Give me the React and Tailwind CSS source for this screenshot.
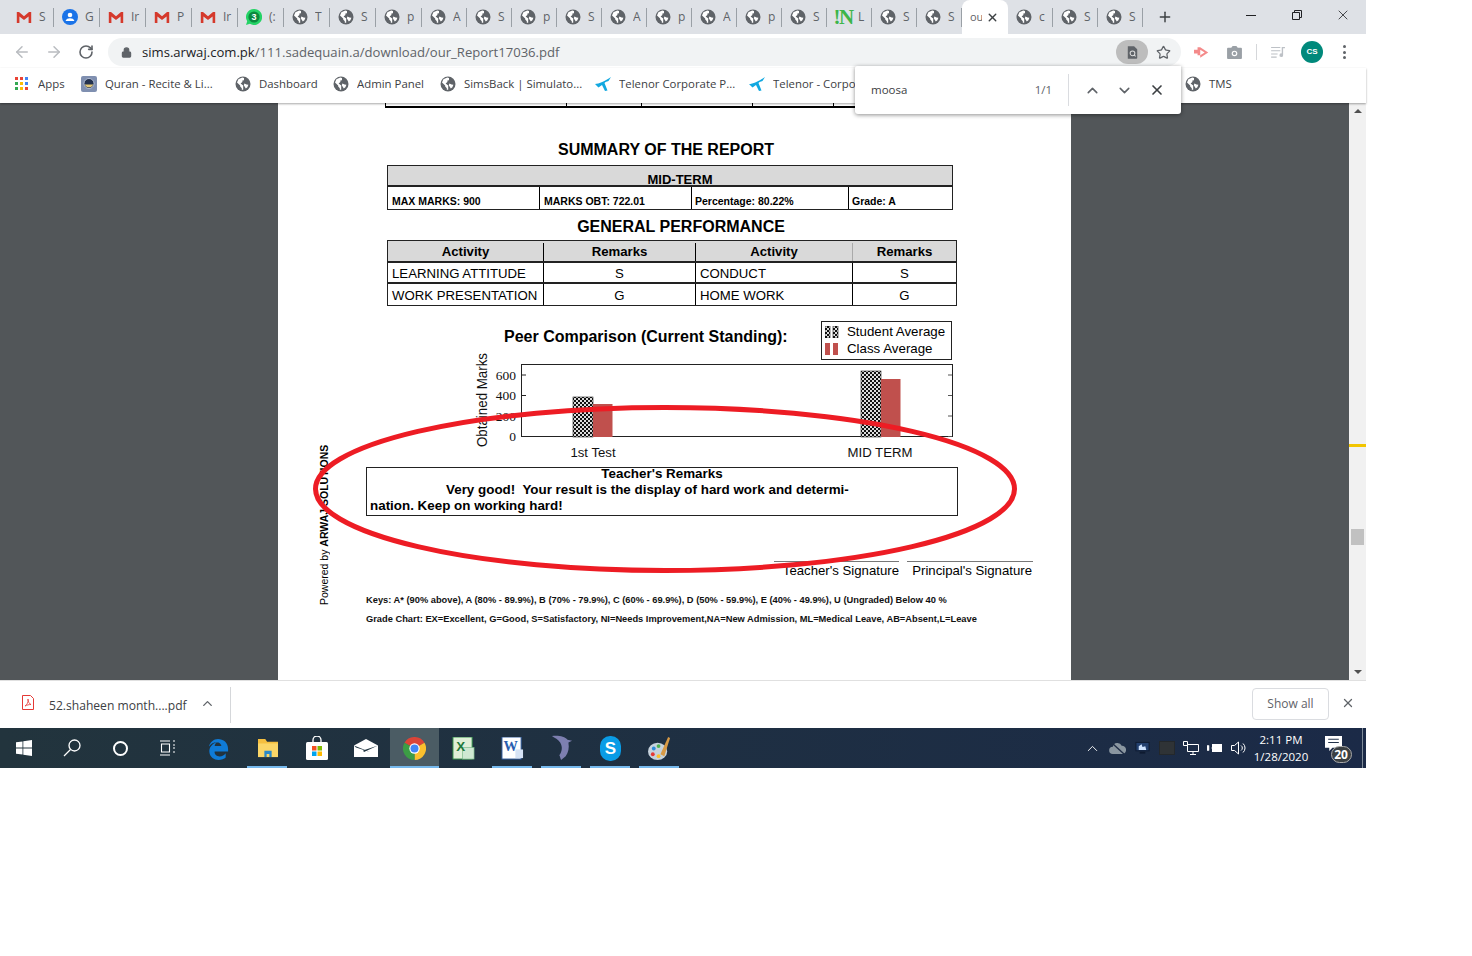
import React from 'react';
import { ArrowLeft, ArrowRight, RotateCw, Lock, Star, ChevronUp, ChevronDown, X, Plus } from 'lucide-react';

const UI = "font-['Open_Sans',sans-serif]";
const PDF = "font-['Liberation_Sans',sans-serif]";

function Globe({ className = 'w-4 h-4' }) {
  return (
    <svg viewBox="0 0 16 16" className={className}>
      <circle cx="8" cy="8" r="7.5" fill="#5f6368" />
      <path d="M7.2 1.6 3.4 3.2 2 6.4l3.2 3.2v1l1.6 1.6v1.6h1.4V9.6L5.6 7.4 7.4 6V4.6L9 4.2V2z" fill="#fff" />
      <path d="M11.6 8.4 9.4 7.4 8.8 9.2l2 3.4 1.6-1.4 1-2.4z" fill="#fff" />
    </svg>
  );
}

function Gmail() {
  return (
    <svg viewBox="0 0 16 16" className="w-[16px] h-4">
      <path d="M.8 3H3l5 4.2L13 3h2.2v11h-2.6V7.4L8 11 3.4 7.4V14H.8z" fill="#d5392c" />
    </svg>
  );
}

function Account() {
  return (
    <svg viewBox="0 0 16 16" className="w-4 h-4">
      <circle cx="8" cy="8" r="8" fill="#1a73e8" />
      <circle cx="8" cy="6" r="2.3" fill="#fff" />
      <path d="M3.6 12c.6-2 2.4-2.7 4.4-2.7s3.8.7 4.4 2.7z" fill="#fff" />
    </svg>
  );
}

function Whatsapp() {
  return (
    <svg viewBox="0 0 16 16" className="w-4 h-4">
      <path d="M8 0a8 8 0 0 0-6.8 12.2L0 16l3.9-1.2A8 8 0 1 0 8 0z" fill="#25d366" />
      <circle cx="8" cy="8" r="5.6" fill="#0b8a3e" />
      <text x="8" y="11" textAnchor="middle" fontSize="9" fontWeight="700" fill="#fff" fontFamily="Liberation Sans">3</text>
    </svg>
  );
}

const tabs = [
  ['m', 'S'], ['a', 'G'], ['m', 'Ir'], ['m', 'P'], ['m', 'Ir'], ['w', '(:'], ['g', 'T'], ['g', 'S'], ['g', 'p'], ['g', 'A'],
  ['g', 'S'], ['g', 'p'], ['g', 'S'], ['g', 'A'], ['g', 'p'], ['g', 'A'], ['g', 'p'], ['g', 'S'], ['i', 'L'], ['g', 'S'], ['g', 'S'],
];
const tabsAfter = ['c', 'S', 'S'];

function TabIcon({ kind }) {
  if (kind === 'm') return <Gmail />;
  if (kind === 'a') return <Account />;
  if (kind === 'w') return <Whatsapp />;
  if (kind === 'i') return <span className="w-4 h-4 flex items-center justify-center text-[21px] leading-none font-bold text-[#3cb54a] font-['Liberation_Serif',serif] tracking-[-1.5px]">!N</span>;
  return <Globe />;
}

function Tab({ kind, label, wide }) {
  return (
    <div className={`${wide ? 'w-[46px]' : 'w-[45px]'} h-full flex items-center pl-2 shrink-0 relative`}>
      <TabIcon kind={kind} />
      <span className="ml-[7px] w-[12px] overflow-hidden text-[12px] text-[#5f6368] whitespace-nowrap">{label}</span>
      <span className="absolute right-0 top-[8px] h-[19px] w-px bg-[#9aa0a6]"></span>
    </div>
  );
}

function TabStrip() {
  return (
    <div className="h-[34px] bg-[#dee1e6] flex pl-[8px] relative">
      {tabs.map((t, i) => <Tab key={i} kind={t[0]} label={t[1]} wide={i < 9} />)}
      <div className="w-[46px] h-full bg-white rounded-t-lg flex items-center pl-2 shrink-0 relative">
        <span className="w-[12px] overflow-hidden text-[11px] text-[#5f6368]">ou</span>
        <X className="w-[13px] h-[13px] ml-[4px] text-[#3c4043]" strokeWidth={2.5} />
      </div>
      {tabsAfter.map((t, i) => <Tab key={i} kind="g" label={t} />)}
      <Plus className="w-[16px] h-[16px] ml-[14px] mt-[9px] text-[#3c4043]" strokeWidth={2.2} />
      <div className="absolute right-0 top-0 h-full flex items-start text-[#202124]">
        <div className="w-[46px] h-[30px] flex items-center justify-center"><span className="w-[10px] h-px bg-[#202124]"></span></div>
        <div className="w-[46px] h-[30px] flex items-center justify-center">
          <svg viewBox="0 0 10 10" className="w-[10px] h-[10px]" fill="none" stroke="#202124"><path d="M.5 2.5h7v7h-7zM2.5 2.5v-2h7v7h-2" /></svg>
        </div>
        <div className="w-[46px] h-[30px] flex items-center justify-center"><X className="w-[16px] h-[16px]" strokeWidth={1.2} /></div>
      </div>
    </div>
  );
}

function AddressBar() {
  return (
    <div className="h-[34px] pt-[2px] bg-white flex items-center">
      <ArrowLeft className="w-[18px] h-[18px] ml-[13px] text-[#b9bcc0]" strokeWidth={2} />
      <ArrowRight className="w-[18px] h-[18px] ml-[14px] text-[#b9bcc0]" strokeWidth={2} />
      <RotateCw className="w-[16px] h-[16px] ml-[15px] text-[#5f6368]" strokeWidth={2.4} />
      <div className="ml-[14px] w-[1073px] h-[28px] rounded-full bg-[#f1f3f4] flex items-center">
        <Lock className="w-[11px] h-[11px] ml-[13px] text-[#5f6368] fill-[#5f6368]" strokeWidth={2.5} />
        <span className="ml-[10px] pt-px text-[13.1px] text-[#5f6368] whitespace-nowrap"><span className="text-[#202124]">sims.arwaj.com.pk</span>/111.sadequain.a/download/our_Report17036.pdf</span>
        <div className="ml-auto w-[32px] h-[24px] rounded-full bg-[#bdbdbd] flex items-center justify-center">
          <svg viewBox="0 0 14 16" className="w-[11px] h-[13px]"><path d="M1 0h8l4 4v11a1 1 0 0 1-1 1H1z" fill="#5f6368" /><circle cx="7" cy="9" r="3" fill="none" stroke="#ddd" strokeWidth="1.3" /><path d="m9 11 2 2" stroke="#ddd" strokeWidth="1.3" /></svg>
        </div>
        <Star className="w-[15px] h-[15px] ml-[8px] mr-[10px] text-[#5f6368]" strokeWidth={2} />
      </div>
      <svg viewBox="0 0 18 14" className="w-[16px] h-[13px] ml-[13px]"><path d="M0 4h4V1h3l9 6-9 6v-3H4V8H0z" fill="#f48a8a" /><path d="M7 4l5 3-5 3z" fill="#fff" /></svg>
      <svg viewBox="0 0 16 14" className="w-[15px] h-[13px] ml-[17px]"><path d="M1 2h3.5L6 0h4l1.5 2H15a1 1 0 0 1 1 1v10a1 1 0 0 1-1 1H1a1 1 0 0 1-1-1V3a1 1 0 0 1 1-1z" fill="#9aa0a6" /><circle cx="8" cy="8" r="3" fill="#fff" /><circle cx="8" cy="8" r="1.7" fill="#9aa0a6" /></svg>
      <span className="w-px h-[16px] ml-[14px] bg-[#d5d7da]"></span>
      <svg viewBox="0 0 16 13" className="w-[15px] h-[12px] ml-[14px]" fill="#bdc1c6"><path d="M0 1h10v1.3H0zM0 4.500h10v1.3H0zM0 8h7v1.3H0zM0 11.500h6v1.3H0z" /><path d="M11.500 1H15v1.500h-2V10a2 2 0 1 1-1.500-1.900z" /></svg>
      <span className="w-[22px] h-[22px] ml-[15px] rounded-full bg-[#00897b] text-white text-[8px] font-bold flex items-center justify-center font-['Liberation_Sans',sans-serif]">CS</span>
      <span className="ml-[20px] flex flex-col gap-[2.5px]">
        <i className="w-[3px] h-[3px] rounded-full bg-[#5f6368]"></i>
        <i className="w-[3px] h-[3px] rounded-full bg-[#5f6368]"></i>
        <i className="w-[3px] h-[3px] rounded-full bg-[#5f6368]"></i>
      </span>
    </div>
  );
}

function AppsIcon() {
  const cols = ['#ea4335', '#ea4335', '#4285f4', '#34a853', '#fbbc05', '#4285f4', '#34a853', '#fbbc05', '#ea4335'];
  return (
    <span className="grid grid-cols-3 gap-[2px] w-[13px]">
      {cols.map((c, i) => <i key={i} className="w-[3px] h-[3px]" style={{ backgroundColor: c }}></i>)}
    </span>
  );
}

function QuranIcon() {
  return (
    <svg viewBox="0 0 16 16" className="w-4 h-4">
      <rect width="16" height="16" rx="2" fill="#7f8fb0" />
      <circle cx="8" cy="7.5" r="5" fill="#24324f" stroke="#c9d3e6" strokeWidth=".8" />
      <path d="M3.8 8.500a4.400 4 0 0 0 8.400 0z" fill="#e2c87a" />
    </svg>
  );
}

function TelenorIcon() {
  return (
    <svg viewBox="0 0 16 14" className="w-[16px] h-[14px]" fill="#12a8e0">
      <path d="M0 7C4 7 10 4 16 0l-2.500 4C11.500 4.500 10.500 5 9.500 6l3 7.500-2.500.5L7 8 3.500 10.500z" />
    </svg>
  );
}

const bookmarks = [
  { icon: <AppsIcon />, label: 'Apps', cls: 'w-[81px] pl-[15px]', gap: 'ml-[10px]' },
  { icon: <QuranIcon />, label: 'Quran - Recite & Li...', cls: 'w-[154px]' },
  { icon: <Globe />, label: 'Dashboard', cls: 'w-[98px]' },
  { icon: <Globe />, label: 'Admin Panel', cls: 'w-[107px]' },
  { icon: <Globe />, label: 'SimsBack | Simulato...', cls: 'w-[155px]' },
  { icon: <TelenorIcon />, label: 'Telenor Corporate P...', cls: 'w-[154px]' },
  // this one runs in under the find bar, so it is cut at the bar's edge
  { icon: <TelenorIcon />, label: 'Telenor - Corporate P...', cls: 'w-[106px]' },
];

function BookmarkBar() {
  return (
    <div className="h-[35px] pb-[3px] bg-white flex items-center relative z-10 shadow-[0_1px_2px_rgba(0,0,0,0.35)]">
      {bookmarks.map((b, i) => (
        <div key={i} className={`${b.cls} shrink-0 flex items-center`}>
          <span className="shrink-0 flex">{b.icon}</span>
          <span className={`${b.gap || 'ml-2'} min-w-0 overflow-hidden text-[11.4px] text-[#3c4043] whitespace-nowrap`}>{b.label}</span>
        </div>
      ))}
      <div className="ml-[330px] flex items-center">
        <Globe />
        <span className="ml-2 text-[11.4px] text-[#3c4043]">TMS</span>
      </div>
    </div>
  );
}

function FindBar() {
  return (
    <div className="absolute z-20 left-[855px] top-[66px] w-[326px] h-[48px] bg-white rounded-b-[3px] rounded-tl-[2px] shadow-[0_1px_4px_rgba(0,0,0,0.45)] flex items-center">
      <span className="ml-4 text-[11.5px] text-[#3c4043]">moosa</span>
      <span className="ml-auto text-[11.5px] text-[#5f6368]">1/1</span>
      <span className="w-px h-[32px] bg-[#dadce0] ml-[16px]"></span>
      <ChevronUp className="w-[17px] h-[17px] ml-[15px] text-[#5f6368]" strokeWidth={2.2} />
      <ChevronDown className="w-[17px] h-[17px] ml-[15px] text-[#5f6368]" strokeWidth={2.2} />
      <X className="w-[16px] h-[16px] ml-[16px] mr-[16px] text-[#3c4043]" strokeWidth={2.5} />
    </div>
  );
}

function Cell({ className = '', children }) {
  return <div className={`flex items-center border-black whitespace-nowrap ${className}`}>{children}</div>;
}

function SummaryTables() {
  return (
    <>
      <div className="ml-[107px] w-[570px] h-[5px] border-x border-b-2 border-black flex">
        <span className="w-[181px] border-r border-black"></span>
        <span className="w-[75px] border-r border-black"></span>
        <span className="w-[111px] border-r border-black"></span>
        <span className="w-[81px] border-r border-black"></span>
      </div>
      <h2 className="mt-[32px] ml-[110px] w-[556px] text-center text-[16px] leading-[20px] font-bold text-black">SUMMARY OF THE REPORT</h2>
      <div className="mt-[5px] ml-[109px] w-[566px] border border-[#222]">
        <div className="h-[21px] bg-[#d9d9d9] border-b-2 border-[#222] pl-[20px] pt-[6px] text-center text-[13px] leading-[16px] font-bold text-black">MID-TERM</div>
        <div className="h-[22px] flex text-[10.5px] font-bold text-black">
          <Cell className="w-[152px] border-r pl-1 pt-[7px]">MAX MARKS: 900</Cell>
          <Cell className="w-[152px] border-r pl-1 pt-[7px]">MARKS OBT: 722.01</Cell>
          <Cell className="w-[157px] border-r pl-[3px] pt-[7px]">Percentage: 80.22%</Cell>
          <Cell className="flex-1 pl-[3px] pt-[7px]">Grade: A</Cell>
        </div>
      </div>
      <h2 className="mt-[7px] ml-[109px] w-[570px] pl-[18px] text-center text-[16px] leading-[20px] font-bold text-black">GENERAL PERFORMANCE</h2>
      <div className="mt-[3px] ml-[109px] w-[570px] border border-[#222] text-black text-[13.2px]">
        <div className="h-[22px] bg-[#d9d9d9] flex font-bold border-b-2 border-[#222] pt-[2px]">
          <Cell className="w-[156px] border-r justify-center">Activity</Cell>
          <Cell className="w-[152px] border-r justify-center">Remarks</Cell>
          <Cell className="w-[157px] justify-center border-r border-r-[#aaa]">Activity</Cell>
          <Cell className="flex-1 justify-center">Remarks</Cell>
        </div>
        <div className="h-[21px] flex border-b-2 border-[#222]">
          <Cell className="w-[156px] border-r pl-1 pt-[3px]">LEARNING ATTITUDE</Cell>
          <Cell className="w-[152px] border-r justify-center pt-[3px]">S</Cell>
          <Cell className="w-[157px] border-r pl-1 pt-[3px]">CONDUCT</Cell>
          <Cell className="flex-1 justify-center pt-[3px]">S</Cell>
        </div>
        <div className="h-[21px] flex">
          <Cell className="w-[156px] border-r pl-1 pt-[2px]">WORK PRESENTATION</Cell>
          <Cell className="w-[152px] border-r justify-center pt-[2px]">G</Cell>
          <Cell className="w-[157px] border-r pl-1 pt-[2px]">HOME WORK</Cell>
          <Cell className="flex-1 justify-center pt-[2px]">G</Cell>
        </div>
      </div>
    </>
  );
}

function CheckerDefs({ id }) {
  return (
    <defs>
      <pattern id={id} width="4" height="4" patternUnits="userSpaceOnUse">
        <rect width="4" height="4" fill="#111" />
        <rect width="2" height="2" fill="#ddd" />
        <rect x="2" y="2" width="2" height="2" fill="#ddd" />
      </pattern>
    </defs>
  );
}

function Chart() {
  // svg origin sits at page x 468 / screen y 360
  const ticks = [[15, '600'], [35.5, '400'], [56, '200'], [76.5, '0']];
  return (
    <svg viewBox="0 0 490 100" className="ml-[190px] w-[490px] h-[100px] block overflow-visible">
      <CheckerDefs id="chk" />
      <rect x="53.5" y="4.5" width="431" height="72" fill="none" stroke="#222" />
      {ticks.map(([y, l]) => (
        <g key={l}>
          <line x1="53" x2="58" y1={y} y2={y} stroke="#222" />
          <line x1="480" x2="484" y1={y} y2={y} stroke="#555" />
          <text x="48" y={y + 4.5} textAnchor="end" fontSize="13.5" fill="#111" fontFamily="Liberation Serif">{l}</text>
        </g>
      ))}
      <rect x="105" y="37" width="20" height="40" fill="url(#chk)" stroke="#222" strokeWidth=".6" />
      <rect x="125" y="44" width="19.5" height="33" fill="#c0504d" />
      <rect x="393" y="11" width="20" height="66" fill="url(#chk)" stroke="#222" strokeWidth=".6" />
      <rect x="413" y="19" width="19.5" height="58" fill="#c0504d" />
      <text transform="translate(19 87) rotate(-90)" fontSize="14" fill="#111" fontFamily="Liberation Sans" textLength="94" lengthAdjust="spacingAndGlyphs">Obtained Marks</text>
      <text x="125" y="97" textAnchor="middle" fontSize="13.2" fill="#111" fontFamily="Liberation Sans">1st Test</text>
      <text x="412" y="97" textAnchor="middle" fontSize="13.2" fill="#111" fontFamily="Liberation Sans">MID TERM</text>
    </svg>
  );
}

function Legend() {
  return (
    <div className="ml-[35px] w-[131px] h-[39px] border border-[#222] text-[13.3px] leading-[17px] text-black pt-[1px]">
      <div className="flex items-center h-[17px]">
        <svg viewBox="0 0 14 12" className="w-[14px] h-[12px] ml-[3px]">
          <CheckerDefs id="chk2" />
          <rect width="5" height="12" fill="url(#chk2)" stroke="#111" strokeWidth=".6" />
          <rect x="8" width="5" height="12" fill="url(#chk2)" stroke="#111" strokeWidth=".6" />
        </svg>
        <span className="ml-[8px]">Student Average</span>
      </div>
      <div className="flex items-center h-[17px]">
        <svg viewBox="0 0 14 12" className="w-[14px] h-[12px] ml-[3px]">
          <rect width="5" height="12" fill="#c0504d" />
          <rect x="8" width="5" height="12" fill="#c0504d" />
        </svg>
        <span className="ml-[8px]">Class Average</span>
      </div>
    </div>
  );
}

function PdfPage() {
  return (
    <div className={`${PDF} relative ml-[278px] w-[793px] h-full bg-white overflow-hidden`}>
      <SummaryTables />
      <div className="mt-[15px] ml-[226px] flex items-start">
        <h3 className="mt-[6px] w-[282px] text-[16px] leading-[20px] font-bold text-black whitespace-nowrap">Peer Comparison (Current Standing):</h3>
        <Legend />
      </div>
      <Chart />
      <div className="mt-[7px] ml-[88px] w-[592px] h-[49px] border border-[#222] text-[13.4px] leading-[16px] font-bold text-black">
        <div className="text-center -mt-[2px]">Teacher's Remarks</div>
        <div className="pl-[79px]">Very good!&nbsp; Your result is the display of hard work and determi-</div>
        <div className="pl-[3px]">nation. Keep on working hard!</div>
      </div>
      <div className="mt-[45px] ml-[496px] flex gap-[8px] text-[13.2px] leading-[16px] text-black whitespace-nowrap">
        <div className="w-[125px] border-t border-[#777] pt-px text-right">Teacher's Signature</div>
        <div className="w-[126px] border-t border-[#777] pt-px text-right pr-px">Principal's Signature</div>
      </div>
      <p className="mt-[15px] ml-[88px] text-[9.3px] leading-[12px] font-bold text-[#111] whitespace-nowrap">Keys: A* (90% above), A (80% - 89.9%), B (70% - 79.9%), C (60% - 69.9%), D (50% - 59.9%), E (40% - 49.9%), U (Ungraded) Below 40 %</p>
      <p className="mt-[7px] ml-[88px] text-[9.3px] leading-[12px] font-bold text-[#111] whitespace-nowrap">Grade Chart: EX=Excellent, G=Good, S=Satisfactory, NI=Needs Improvement,NA=New Admission, ML=Medical Leave, AB=Absent,L=Leave</p>
      <div className="absolute left-[40px] top-[342px] h-[160px] [writing-mode:vertical-rl] rotate-180 text-[10.5px] leading-[12px] text-black whitespace-nowrap">Powered by <b>ARWAJ SOLUTIONS</b></div>
      {/* red hand-drawn circle over the remarks */}
      <svg viewBox="0 0 720 180" className="absolute left-[30px] top-[296px] w-[720px] h-[180px]">
        <ellipse cx="357" cy="90" rx="349.5" ry="81.5" fill="none" stroke="#ed1c24" strokeWidth="5" />
      </svg>
    </div>
  );
}

function Scrollbar() {
  return (
    <div className="absolute right-0 top-0 w-[17px] h-full bg-[#f1f1f1] flex flex-col items-center">
      <span className="mt-[6px] border-x-[4px] border-x-transparent border-b-[4px] border-b-[#505050]"></span>
      <span className="absolute left-0 top-[341px] w-full h-[3px] bg-[#f2c500]"></span>
      <span className="absolute left-[2px] top-[426px] w-[13px] h-[16px] bg-[#c1c1c1]"></span>
      <span className="mt-auto mb-[6px] border-x-[4px] border-x-transparent border-t-[4px] border-t-[#505050]"></span>
    </div>
  );
}

function DownloadBar() {
  return (
    <div className="h-[48px] bg-white flex items-center border-t border-[#e0e0e0]">
      <svg viewBox="0 0 12 15" className="w-[12px] h-[15px] ml-[22px] -mt-[4px]" fill="none" stroke="#e53935" strokeWidth="1">
        <path d="M.5.5h8l3 3v11H.5z" />
        <path d="M3 11c2-1 3.5-4 3-7 0 3 1.5 5 3 5.5-2 0-4 .5-6 1.5z" strokeWidth=".8" />
      </svg>
      <span className="ml-[15px] pt-[4px] text-[12.1px] text-[#3c4043] whitespace-nowrap">52.shaheen month....pdf</span>
      <ChevronUp className="w-[15px] h-[15px] ml-[13px] -mt-[3px] text-[#5f6368]" strokeWidth={2.2} />
      <span className="w-px h-[36px] ml-[15px] bg-[#d5d7da]"></span>
      <button className="ml-auto w-[77px] h-[32px] -mt-[2px] border border-[#dadce0] rounded-[4px] text-[12px] text-[#5f6368]">Show all</button>
      <X className="w-[14px] h-[14px] ml-[12px] mr-[11px] -mt-[3px] text-[#5f6368]" strokeWidth={2.2} />
    </div>
  );
}

function ChromeIcon() {
  return (
    <svg viewBox="0 0 24 24" className="w-[23px] h-[23px]">
      <path d="M12 12 1.600 6A12 12 0 0 1 22.400 6z" fill="#db4437" />
      <path d="M12 12 22.400 6A12 12 0 0 1 12 24z" fill="#fbc02d" />
      <path d="M12 12 12 24A12 12 0 0 1 1.600 6z" fill="#3c9d45" />
      <circle cx="12" cy="12" r="5.4" fill="#fff" />
      <circle cx="12" cy="12" r="4.2" fill="#4285f4" />
    </svg>
  );
}

const taskIcons = [
  {
    on: false,
    icon: (
      <svg viewBox="0 0 24 24" className="w-[23px] h-[23px]">
        <path d="M19.500 17c-2 3.500-8 4.500-10.500 1.500C8 17.300 7.800 16 8 15h14v-2.500C22 5.500 17 2 11.500 2 7 2 3 5.500 2 10c2-3 5-4.500 8-4.500 3 0 5 2 5 4H8c.5-3 2.500-4 2-4-5 1.500-8 6-7.500 10.500C3 21 7.500 24 12 24c3 0 6-1 7.500-2.500z" fill="#0f7bd7" />
      </svg>
    ),
  },
  {
    on: true,
    icon: (
      <svg viewBox="0 0 24 22" className="w-[22px] h-[20px]">
        <path d="M1 1h8l2 3h12v17H1z" fill="#f5bf3f" />
        <path d="M1 6h22v15H1z" fill="#fbd667" />
        <path d="M8 14h8v7h-2.500v-3.500h-3V21H8z" fill="#2a88c9" />
      </svg>
    ),
  },
  {
    on: false,
    icon: (
      <svg viewBox="0 0 22 24" className="w-[22px] h-[24px]">
        <path d="M7 7V4a4 4 0 0 1 8 0v3" fill="none" stroke="#fff" strokeWidth="1.3" />
        <rect y="6" width="22" height="18" rx="1.5" fill="#fff" />
        <rect x="6" y="10" width="4.5" height="4.5" fill="#f25022" />
        <rect x="11.5" y="10" width="4.5" height="4.5" fill="#7fba00" />
        <rect x="6" y="15.5" width="4.5" height="4.5" fill="#00a4ef" />
        <rect x="11.5" y="15.5" width="4.5" height="4.5" fill="#ffb900" />
      </svg>
    ),
  },
  {
    on: false,
    icon: (
      <svg viewBox="0 0 24 18" className="w-[24px] h-[18px]">
        <path d="M0 6.500 12 0l12 6.500V18H0z" fill="#fff" />
        <path d="M0 6.500 16 13 2 8.500z" fill="#1f3440" />
        <path d="M24 6.500 10 13l-1-1.500z" fill="#1f3440" />
      </svg>
    ),
  },
  { on: true, active: true, icon: <ChromeIcon /> },
  {
    on: false,
    icon: (
      <svg viewBox="0 0 24 24" className="w-[23px] h-[23px]">
        <rect x="1" y="0" width="20" height="23" fill="#dff0d8" stroke="#2f8d46" />
        <rect x="11" y="11" width="12" height="12" fill="#cfe8d2" stroke="#7ab98a" strokeWidth=".7" />
        <text x="9" y="15" textAnchor="middle" fontSize="14" fontWeight="700" fill="#1f7a3d" fontFamily="Liberation Sans">X</text>
      </svg>
    ),
  },
  {
    on: true,
    icon: (
      <svg viewBox="0 0 24 24" className="w-[23px] h-[23px]">
        <rect x="1" y="0" width="20" height="23" fill="#fff" stroke="#2a5699" />
        <text x="10" y="15" textAnchor="middle" fontSize="15" fontWeight="700" fill="#2a5eaf" fontFamily="Liberation Serif">W</text>
        <rect x="15" y="13" width="8" height="9" fill="#d6e3f5" />
      </svg>
    ),
  },
  {
    on: true,
    icon: (
      <svg viewBox="0 0 24 28" className="w-[22px] h-[26px]">
        <path d="M1 1c6-1 14 0 17 4l5 1-4 2c1 6 0 11-3 15l-5 4c-1-2-1-4-2-5 3-4 4-9 1-14C8 5 4 3 1 1z" fill="#7d7fb0" />
      </svg>
    ),
  },
  {
    on: true,
    icon: (
      <span className="w-[21px] h-[25px] rounded-[10px] bg-[#0a9ce6] text-white font-bold text-[17px] leading-none flex items-center justify-center font-['Liberation_Sans',sans-serif]">S</span>
    ),
  },
  {
    on: true,
    icon: (
      <svg viewBox="0 0 24 26" className="w-[23px] h-[25px]">
        <ellipse cx="10" cy="16" rx="10" ry="9" fill="#c6d2dc" />
        <circle cx="6" cy="13" r="2" fill="#2e8bd8" />
        <circle cx="11" cy="10.5" r="2" fill="#4caf50" />
        <circle cx="5" cy="19" r="2" fill="#e53935" />
        <circle cx="11" cy="21" r="2" fill="#fbc02d" />
        <path d="M13 19 21 1l2 1-6 19z" fill="#d89a45" />
      </svg>
    ),
  },
];

function Taskbar() {
  return (
    <div className="h-[40px] bg-linear-to-r from-[#22343d] to-[#1b2a47] flex items-stretch relative text-white">
      <div className="w-[48px] flex items-center justify-center">
        <svg viewBox="0 0 16 16" className="w-[16px] h-[16px]" fill="#fff"><path d="M0 2.300 6.500 1.400v6.200H0zM7.300 1.300 16 0v7.600H7.300zM0 8.400h6.500v6.200L0 13.700zM7.300 8.400H16V16l-8.700-1.200z" /></svg>
      </div>
      <div className="w-[48px] flex items-center justify-center">
        <svg viewBox="0 0 18 18" className="w-[18px] h-[18px]" fill="none" stroke="#fff" strokeWidth="1.3"><circle cx="11.5" cy="6.5" r="5.5" /><path d="M7.500 10.500 1 17" /></svg>
      </div>
      <div className="w-[48px] flex items-center justify-center">
        <span className="w-[15px] h-[15px] rounded-full border-2 border-white"></span>
      </div>
      <div className="w-[48px] flex items-center justify-center">
        <svg viewBox="0 0 16 16" className="w-[16px] h-[16px]" fill="none" stroke="#fff" strokeWidth="1.1"><path d="M0 1h10M0 15h10M1.500 4h8v8h-8zM13 1h2M13 5h2v0M13 8h2M13 12h2" /></svg>
      </div>
      <div className="w-[2px]"></div>
      {taskIcons.map((t, i) => (
        <div key={i} className={`w-[49px] flex items-center justify-center relative ${t.active ? 'bg-[#4b5c64]' : ''}`}>
          {t.icon}
          {t.on && <span className={`absolute bottom-0 h-[2px] bg-[#76b9ed] ${t.active ? 'left-0 w-full' : 'left-[4px] w-[40px]'}`}></span>}
        </div>
      ))}
      <div className="ml-auto flex items-center pr-[13.5px]">
        <ChevronUp className="w-[17px] h-[17px]" strokeWidth={1.3} />
        <svg viewBox="0 0 18 14" className="w-[17px] h-[13px] ml-[8px]"><path d="M4 13a4 4 0 0 1 0-8 5 5 0 0 1 9.500-1A4.500 4.500 0 0 1 14 13z" fill="#8a96a0" /><path d="M3 1l13 12" stroke="#1f2c45" strokeWidth="1.5" /></svg>
        <svg viewBox="0 0 16 14" className="w-[15px] h-[14px] ml-[9px]"><rect x="1" y="1" width="14" height="9" fill="#23406f" stroke="#0e1a30" /><path d="M4 9V5l3-2 1 3 3-1 1 4z" fill="#cfe3ff" /><rect x="5" y="11" width="6" height="2" fill="#0e1a30" /></svg>
        <span className="w-[16px] h-[14px] ml-[9px] bg-[#2f3336] border border-[#24282b]"></span>
        <svg viewBox="0 0 16 14" className="w-[16px] h-[14px] ml-[8px]" fill="none" stroke="#fff"><path d="M4.500 3.500h11v7h-11zM10 10.500v3M7 13.500h6" /><path d="M.5.500h4v4h-4z" fill="#1d2c45" /></svg>
        <svg viewBox="0 0 16 10" className="w-[16px] h-[10px] ml-[8px]"><path d="M4 5h1M0 2.500h2v5H0z" stroke="#fff" fill="#fff" strokeWidth=".5" /><rect x="5" y="1" width="10" height="8" fill="#fff" /></svg>
        <svg viewBox="0 0 16 14" className="w-[16px] h-[14px] ml-[8px]" fill="none" stroke="#fff"><path d="M.5 4.500h3L7.500 1v12l-4-3.500h-3zM10 4.500a3 3 0 0 1 0 5M12 2.500a6 6 0 0 1 0 9" /></svg>
        <div className="w-[66px] ml-[1.5px] text-center text-[11.5px] leading-[17px]">
          <div>2:11 PM</div>
          <div className="whitespace-nowrap">1/28/2020</div>
        </div>
        <div className="relative w-[36px] ml-[2.5px] h-[30px]">
          <svg viewBox="0 0 16 14" className="absolute left-[8px] top-[3px] w-[17px] h-[15px]"><path d="M0 0h16v11H7l-3 3v-3H0z" fill="#fff" /><path d="M3 3h10M3 6h10" stroke="#22324a" /></svg>
          <span className="absolute left-[14px] top-[13px] w-[21px] h-[17px] rounded-full bg-[#3a3f42] border border-[#aaa] text-[12px] leading-[15px] text-center font-bold">20</span>
        </div>
      </div>
      <span className="absolute right-[3px] top-0 h-full w-px bg-[#7f8b98]"></span>
    </div>
  );
}

export default function App() {
  return (
    <div className="w-[1472px] h-[956px] bg-white overflow-hidden">
      <div className={`${UI} relative w-[1366px] h-[768px] flex flex-col`}>
        <TabStrip />
        <AddressBar />
        <BookmarkBar />
        <FindBar />
        <div className="relative h-[577px] bg-[#525659]">
          <PdfPage />
          <Scrollbar />
        </div>
        <DownloadBar />
        <Taskbar />
      </div>
    </div>
  );
}
